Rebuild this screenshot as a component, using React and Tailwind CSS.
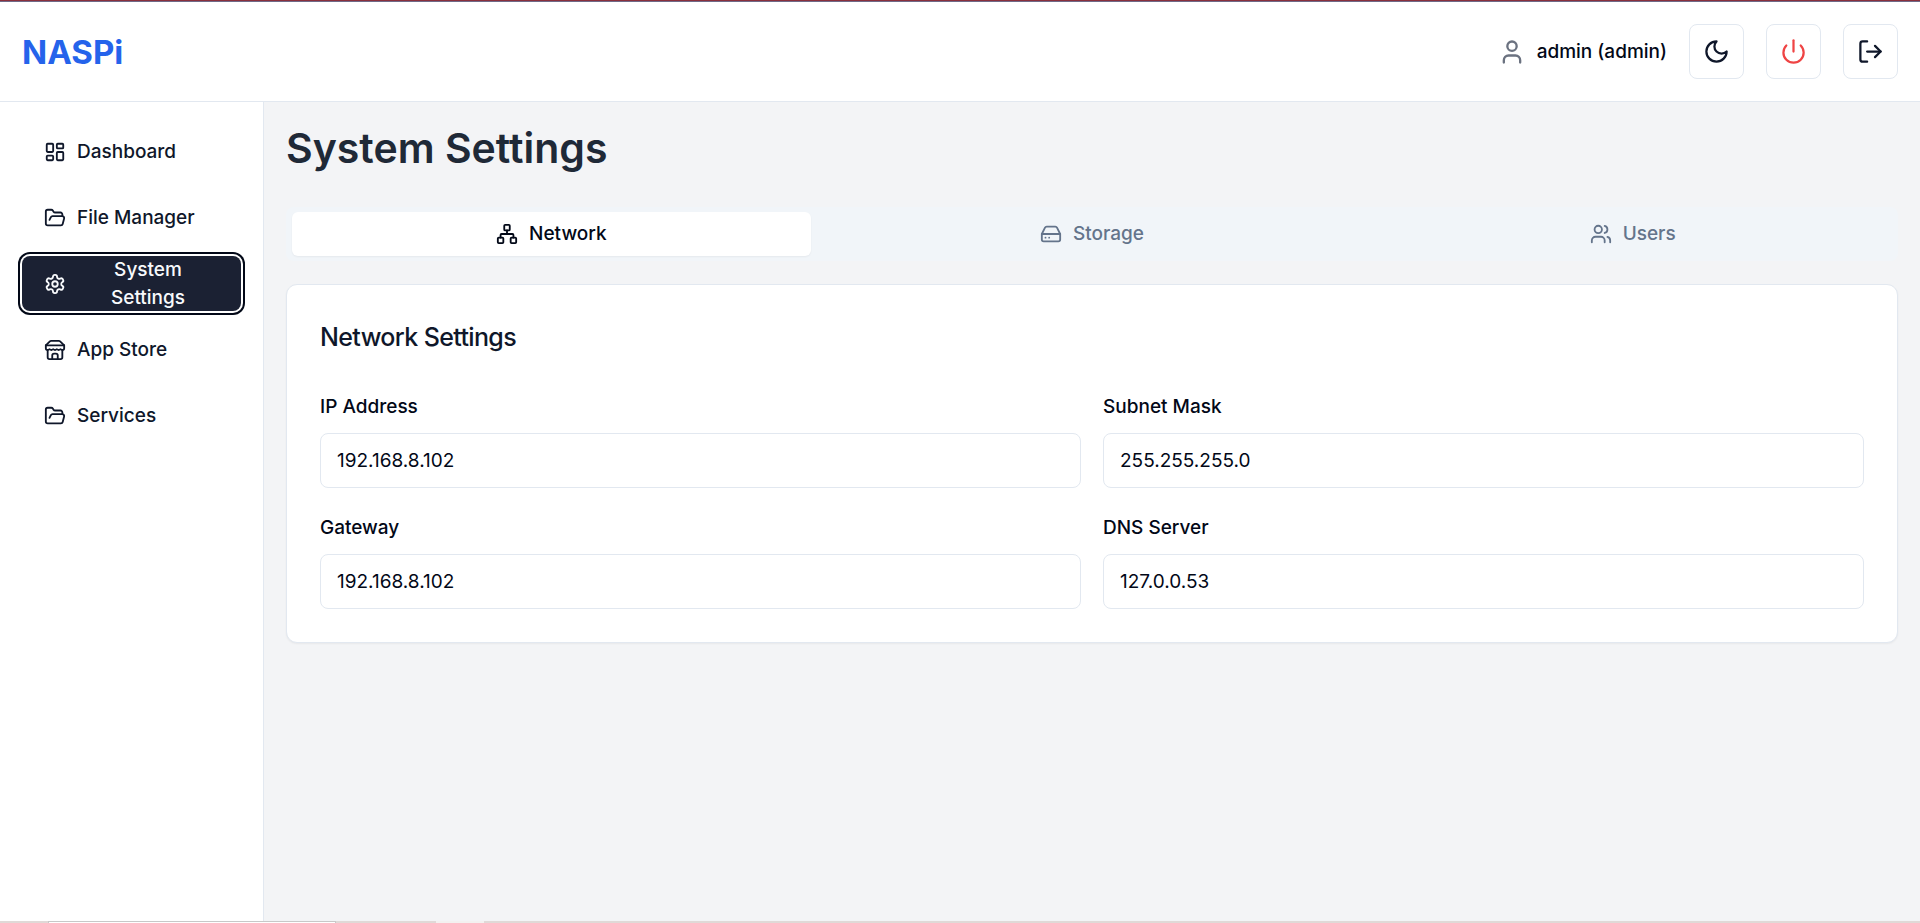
import { useState } from "react";
import {
  FolderOpen,
  HardDrive,
  LayoutDashboard,
  LogOut,
  Network,
  Power,
  User,
  Users,
} from "lucide-react";

function LineIcon({ className, children }) {
  return (
    <svg
      viewBox="0 0 24 24"
      fill="none"
      stroke="currentColor"
      strokeWidth="2"
      strokeLinecap="round"
      strokeLinejoin="round"
      className={className}
      aria-hidden="true"
    >
      {children}
    </svg>
  );
}

function MoonIcon({ className }) {
  return (
    <LineIcon className={className}>
      <path d="M12 3a6 6 0 0 0 9 9 9 9 0 1 1-9-9Z" />
    </LineIcon>
  );
}

function GearIcon({ className }) {
  return (
    <LineIcon className={className}>
      <path d="M12.22 2h-.44a2 2 0 0 0-2 2v.18a2 2 0 0 1-1 1.73l-.43.25a2 2 0 0 1-2 0l-.15-.08a2 2 0 0 0-2.73.73l-.22.38a2 2 0 0 0 .73 2.73l.15.1a2 2 0 0 1 1 1.72v.51a2 2 0 0 1-1 1.74l-.15.09a2 2 0 0 0-.73 2.73l.22.38a2 2 0 0 0 2.73.73l.15-.08a2 2 0 0 1 2 0l.43.25a2 2 0 0 1 1 1.73V20a2 2 0 0 0 2 2h.44a2 2 0 0 0 2-2v-.18a2 2 0 0 1 1-1.73l.43-.25a2 2 0 0 1 2 0l.15.08a2 2 0 0 0 2.73-.73l.22-.39a2 2 0 0 0-.73-2.73l-.15-.08a2 2 0 0 1-1-1.74v-.5a2 2 0 0 1 1-1.74l.15-.09a2 2 0 0 0 .73-2.73l-.22-.38a2 2 0 0 0-2.73-.73l-.15.08a2 2 0 0 1-2 0l-.43-.25a2 2 0 0 1-1-1.73V4a2 2 0 0 0-2-2z" />
      <circle cx="12" cy="12" r="3" />
    </LineIcon>
  );
}

function StoreIcon({ className }) {
  return (
    <LineIcon className={className}>
      <path d="m2 7 4.41-4.41A2 2 0 0 1 7.83 2h8.34a2 2 0 0 1 1.42.59L22 7" />
      <path d="M4 12v8a2 2 0 0 0 2 2h12a2 2 0 0 0 2-2v-8" />
      <path d="M15 22v-4a2 2 0 0 0-2-2h-2a2 2 0 0 0-2 2v4" />
      <path d="M2 7h20" />
      <path d="M22 7v3a2 2 0 0 1-2 2a2.7 2.7 0 0 1-1.59-.63.7.7 0 0 0-.82 0A2.7 2.7 0 0 1 16 12a2.7 2.7 0 0 1-1.59-.63.7.7 0 0 0-.82 0A2.7 2.7 0 0 1 12 12a2.7 2.7 0 0 1-1.59-.63.7.7 0 0 0-.82 0A2.7 2.7 0 0 1 8 12a2.7 2.7 0 0 1-1.59-.63.7.7 0 0 0-.82 0A2.7 2.7 0 0 1 4 12a2 2 0 0 1-2-2V7" />
    </LineIcon>
  );
}

const navItems = [
  { label: "Dashboard", Icon: LayoutDashboard },
  { label: "File Manager", Icon: FolderOpen },
  { label: "System Settings", Icon: GearIcon, active: true },
  { label: "App Store", Icon: StoreIcon },
  { label: "Services", Icon: FolderOpen },
];

const tabs = [
  { label: "Network", Icon: Network },
  { label: "Storage", Icon: HardDrive },
  { label: "Users", Icon: Users },
];

const fields = [
  { id: "ip", label: "IP Address", value: "192.168.8.102" },
  { id: "mask", label: "Subnet Mask", value: "255.255.255.0" },
  { id: "gateway", label: "Gateway", value: "192.168.8.102" },
  { id: "dns", label: "DNS Server", value: "127.0.0.53" },
];

function IconButton({ label, children }) {
  return (
    <button
      type="button"
      aria-label={label}
      className="flex size-[55px] items-center justify-center rounded-lg border border-[#e2e8f0] bg-white text-[#0f172a]"
    >
      {children}
    </button>
  );
}

function Header() {
  return (
    <header className="flex items-center justify-between border-b border-[#e2e8f0] bg-white p-[22px]">
      <div className="text-[33px] leading-[44px] font-bold text-[#2563eb]">NASPi</div>
      <div className="flex items-center gap-[22px]">
        <div className="flex items-center gap-[11px]">
          <User className="size-[28px] text-[#6b7280]" />
          <span className="text-[19px] leading-[28px] font-medium">admin (admin)</span>
        </div>
        <IconButton label="Toggle theme">
          <MoonIcon className="size-[27px]" />
        </IconButton>
        <IconButton label="Power">
          <Power className="size-[27px] text-[#ef4444]" />
        </IconButton>
        <IconButton label="Log out">
          <LogOut className="size-[27px]" />
        </IconButton>
      </div>
    </header>
  );
}

function Sidebar() {
  return (
    <aside className="w-[264px] shrink-0 border-r border-[#e2e8f0] bg-white p-[22px]">
      <nav className="flex flex-col gap-[11px]">
        {navItems.map(({ label, Icon, active }) => (
          <button
            key={label}
            type="button"
            className={
              "flex h-[55px] items-center gap-[11px] rounded-lg px-[22px] text-[19px] leading-[28px] font-medium " +
              (active
                ? "bg-[#1b2133] text-[#f8fafc] ring-2 ring-[#020817] ring-offset-2"
                : "text-[#0f172a]")
            }
          >
            <Icon className="size-[22px] shrink-0" />
            <span className={active ? "flex-1 px-6 text-center" : ""}>{label}</span>
          </button>
        ))}
      </nav>
    </aside>
  );
}

function SettingsPanel() {
  const [values, setValues] = useState(() =>
    Object.fromEntries(fields.map((f) => [f.id, f.value]))
  );
  return (
    <section className="mt-[23px] rounded-[11px] border border-[#e2e8f0] bg-white p-[33px] shadow-xs">
      <h2 className="text-[25px] leading-[38px] font-medium tracking-tight text-[#0f172a]">
        Network Settings
      </h2>
      <div className="mt-[33px] grid grid-cols-2 gap-[22px]">
        {fields.map(({ id, label }) => (
          <div key={id}>
            <label htmlFor={id} className="block text-[19px] leading-[35px] font-medium">
              {label}
            </label>
            <input
              id={id}
              type="text"
              value={values[id]}
              onChange={(e) => setValues({ ...values, [id]: e.target.value })}
              className="mt-[9px] block h-[55px] w-full rounded-lg border border-[#e2e8f0] bg-white px-4 text-[19px] leading-[28px]"
            />
          </div>
        ))}
      </div>
    </section>
  );
}

export default function App() {
  return (
    <div className="flex min-h-screen flex-col bg-[#f3f4f6] font-['Inter',sans-serif] text-[#020817]">
      <div className="h-[2px] border-b border-[#6f6a88] bg-[#8a2f3c]" />
      <Header />
      <div className="flex flex-1">
        <Sidebar />
        <main className="min-w-0 flex-1 p-[22px]">
          <h1 className="mb-[35px] text-[41px] leading-[48px] font-semibold text-[#1f2937]">
            System Settings
          </h1>
          <div
            role="tablist"
            className="grid grid-cols-3 gap-[22px] rounded-lg bg-[#f1f5f9] px-[6px] py-[5px] text-[#64748b]"
          >
            {tabs.map(({ label, Icon }, i) => (
              <button
                key={label}
                type="button"
                role="tab"
                aria-selected={i === 0}
                className={
                  "flex items-center justify-center gap-[11px] rounded-md py-2 text-[19px] leading-[28px] font-medium " +
                  (i === 0 ? "bg-white text-[#020817] shadow-xs" : "")
                }
              >
                <Icon className="size-[22px]" />
                {label}
              </button>
            ))}
          </div>
          <SettingsPanel />
        </main>
      </div>
      <div className="flex h-[2px] bg-[#e0d9d7]">
        <div className="ml-[48px] w-[288px] border border-b-0 border-[#c8c8c8] bg-white" />
        <div className="ml-[100px] w-[48px] bg-[#f3f1f0]" />
      </div>
    </div>
  );
}
